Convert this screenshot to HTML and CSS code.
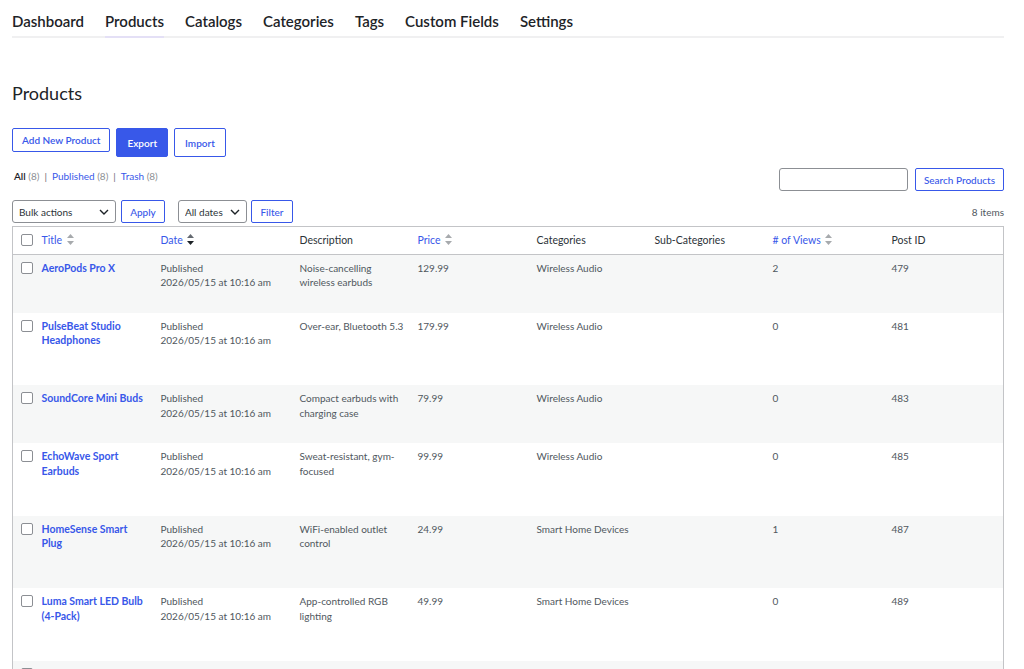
FILE: index.html
```html
<!DOCTYPE html>
<html lang="en">
<head>
  <meta charset="UTF-8">
  <meta name="viewport" content="width=device-width, initial-scale=1.0">
  <title>Products</title>
  <link rel="stylesheet" href="styles.css">
</head>
<body>
  <div class="wrap">
    <nav class="tabs">
      <a href="#">Dashboard</a>
      <a href="#" class="active">Products</a>
      <a href="#">Catalogs</a>
      <a href="#">Categories</a>
      <a href="#">Tags</a>
      <a href="#">Custom Fields</a>
      <a href="#">Settings</a>
    </nav>

    <h1 class="page-title">Products</h1>

    <div class="page-actions">
      <a href="#" class="btn btn-small">Add New Product</a>
      <a href="#" class="btn btn-primary">Export</a>
      <a href="#" class="btn">Import</a>
    </div>

    <div class="status-row">
      <ul class="subsubsub">
        <li><b>All</b> <span class="count">(8)</span></li>
        <li class="sep">|</li>
        <li><a href="#">Published</a> <span class="count">(8)</span></li>
        <li class="sep">|</li>
        <li><a href="#">Trash</a> <span class="count">(8)</span></li>
      </ul>
      <form class="search-box">
        <input type="search">
        <button type="button" class="btn btn-input">Search Products</button>
      </form>
    </div>

    <div class="tablenav">
      <div class="select bulk">
        <select><option>Bulk actions</option></select>
        <svg viewBox="0 0 10 6" width="10" height="6"><path d="M1 1l4 4 4-4" fill="none" stroke="#1d2327" stroke-width="1.4"/></svg>
      </div>
      <button type="button" class="btn btn-input">Apply</button>
      <div class="select dates">
        <select><option>All dates</option></select>
        <svg viewBox="0 0 10 6" width="10" height="6"><path d="M1 1l4 4 4-4" fill="none" stroke="#1d2327" stroke-width="1.4"/></svg>
      </div>
      <button type="button" class="btn btn-input">Filter</button>
      <span class="items">8 items</span>
    </div>

    <table class="list">
      <colgroup>
        <col class="c-check"><col class="c-119"><col class="c-date"><col class="c-118">
        <col class="c-119"><col class="c-118"><col class="c-118"><col class="c-119"><col>
      </colgroup>
      <thead>
        <tr>
          <th class="check"><input type="checkbox"></th>
          <th><a href="#">Title <svg class="sort" viewBox="0 0 7 11" width="7" height="11"><path d="M3.5 0L7 4H0z" fill="#a7aaad"/><path d="M3.5 11L7 7H0z" fill="#a7aaad"/></svg></a></th>
          <th><a href="#">Date <svg class="sort" viewBox="0 0 7 11" width="7" height="11"><path d="M3.5 0L7 4H0z" fill="#646970"/><path d="M3.5 11L7 7H0z" fill="#1d2327"/></svg></a></th>
          <th>Description</th>
          <th><a href="#">Price <svg class="sort" viewBox="0 0 7 11" width="7" height="11"><path d="M3.5 0L7 4H0z" fill="#a7aaad"/><path d="M3.5 11L7 7H0z" fill="#a7aaad"/></svg></a></th>
          <th>Categories</th>
          <th>Sub-Categories</th>
          <th><a href="#"># of Views <svg class="sort" viewBox="0 0 7 11" width="7" height="11"><path d="M3.5 0L7 4H0z" fill="#a7aaad"/><path d="M3.5 11L7 7H0z" fill="#a7aaad"/></svg></a></th>
          <th>Post ID</th>
        </tr>
      </thead>
      <tbody>
        <tr>
          <td class="check"><input type="checkbox"></td>
          <td><a href="#" class="row-title">AeroPods Pro X</a><div class="row-actions">Edit | Quick Edit | Trash | View</div></td>
          <td>Published<br>2026/05/15 at 10:16 am</td>
          <td>Noise-cancelling wireless earbuds</td>
          <td>129.99</td>
          <td>Wireless Audio</td>
          <td></td>
          <td>2</td>
          <td>479</td>
        </tr>
        <tr>
          <td class="check"><input type="checkbox"></td>
          <td><a href="#" class="row-title">PulseBeat Studio Headphones</a><div class="row-actions">Edit | Quick Edit | Trash | View</div></td>
          <td>Published<br>2026/05/15 at 10:16 am</td>
          <td>Over-ear, Bluetooth 5.3</td>
          <td>179.99</td>
          <td>Wireless Audio</td>
          <td></td>
          <td>0</td>
          <td>481</td>
        </tr>
        <tr>
          <td class="check"><input type="checkbox"></td>
          <td><a href="#" class="row-title">SoundCore Mini Buds</a><div class="row-actions">Edit | Quick Edit | Trash | View</div></td>
          <td>Published<br>2026/05/15 at 10:16 am</td>
          <td>Compact earbuds with charging case</td>
          <td>79.99</td>
          <td>Wireless Audio</td>
          <td></td>
          <td>0</td>
          <td>483</td>
        </tr>
        <tr>
          <td class="check"><input type="checkbox"></td>
          <td><a href="#" class="row-title">EchoWave Sport Earbuds</a><div class="row-actions">Edit | Quick Edit | Trash | View</div></td>
          <td>Published<br>2026/05/15 at 10:16 am</td>
          <td>Sweat-resistant, gym-focused</td>
          <td>99.99</td>
          <td>Wireless Audio</td>
          <td></td>
          <td>0</td>
          <td>485</td>
        </tr>
        <tr>
          <td class="check"><input type="checkbox"></td>
          <td><a href="#" class="row-title">HomeSense Smart Plug</a><div class="row-actions">Edit | Quick Edit | Trash | View</div></td>
          <td>Published<br>2026/05/15 at 10:16 am</td>
          <td>WiFi-enabled outlet control</td>
          <td>24.99</td>
          <td>Smart Home Devices</td>
          <td></td>
          <td>1</td>
          <td>487</td>
        </tr>
        <tr>
          <td class="check"><input type="checkbox"></td>
          <td><a href="#" class="row-title">Luma Smart LED Bulb (4-Pack)</a><div class="row-actions">Edit | Quick Edit | Trash | View</div></td>
          <td>Published<br>2026/05/15 at 10:16 am</td>
          <td>App-controlled RGB lighting</td>
          <td>49.99</td>
          <td>Smart Home Devices</td>
          <td></td>
          <td>0</td>
          <td>489</td>
        </tr>
        <tr>
          <td class="check"><input type="checkbox"></td>
          <td><a href="#" class="row-title">NestGuard Doorbell</a><div class="row-actions">Edit | Quick Edit | Trash | View</div></td>
          <td>Published<br>2026/05/15 at 10:16 am</td>
          <td>1080p HD, night vision</td>
          <td>119.99</td>
          <td>Smart Home Devices</td>
          <td></td>
          <td>0</td>
          <td>491</td>
        </tr>
        <tr>
          <td class="check"><input type="checkbox"></td>
          <td><a href="#" class="row-title">ThermoIQ Thermostat</a><div class="row-actions">Edit | Quick Edit | Trash | View</div></td>
          <td>Published<br>2026/05/15 at 10:16 am</td>
          <td>Learns your schedule</td>
          <td>149.99</td>
          <td>Smart Home Devices</td>
          <td></td>
          <td>0</td>
          <td>493</td>
        </tr>
      </tbody>
    </table>
  </div>
</body>
</html>
```

FILE: styles.css
```css
* {
  box-sizing: border-box;
}
body {
  margin: 0;
  background: #fff;
  color: #50575e;
  font-family: Lato, "Noto Sans", sans-serif;
  font-size: 10px;
}
a {
  color: #3858e9;
  text-decoration: none;
}
.wrap {
  padding: 0 20px 0 12px;
}

/* top tabs */
.tabs {
  display: flex;
  gap: 21px;
  padding-top: 11px;
  border-bottom: 2px solid #f0f0f1;
}
.tabs a {
  color: #1d2327;
  font-size: 15px;
  font-weight: 600;
  line-height: 20px;
  padding-bottom: 5px;
  margin-bottom: -2px;
  border-bottom: 2px solid transparent;
}
.tabs a.active {
  border-bottom-color: #e4e0f6;
}

.page-title {
  margin: 41px 0 21px;
  font-size: 18px;
  font-weight: 400;
  line-height: 28px;
  color: #1d2327;
}

/* buttons */
.btn {
  display: inline-flex;
  align-items: center;
  justify-content: center;
  height: 29px;
  padding: 0 10px;
  border: 1px solid #3858e9;
  border-radius: 2px;
  background: #fff;
  color: #3858e9;
  font-family: inherit;
  font-size: 10px;
  font-weight: 600;
  cursor: pointer;
}
.btn-small {
  height: 24px;
  padding: 0 9px;
}
.btn-primary {
  background: #3858e9;
  color: #fff;
}
.btn-input {
  height: 23px;
  padding: 0 9px;
  font-weight: 500;
}
.page-actions {
  display: flex;
  align-items: flex-start;
  gap: 6px;
}

.status-row {
  display: flex;
  justify-content: space-between;
  align-items: flex-start;
  margin-top: 11px;
}
.subsubsub {
  display: flex;
  gap: 5px;
  margin: 0;
  padding: 0 0 0 2px;
  list-style: none;
  line-height: 16px;
  color: #646970;
}
.subsubsub b {
  color: #1d2327;
  font-weight: 600;
}
.count {
  color: #8c8f94;
}
.search-box {
  display: flex;
  gap: 7px;
  margin: 0;
}
.search-box input {
  width: 129px;
  height: 23px;
  border: 1px solid #8c8f94;
  border-radius: 3px;
}
.search-box .btn {
  width: 89px;
  padding: 0;
}

/* filters */
.tablenav {
  display: flex;
  align-items: center;
  margin-top: 9px;
  height: 23px;
}
.select {
  position: relative;
  height: 23px;
}
.select select {
  appearance: none;
  height: 23px;
  padding: 0 20px 0 6px;
  border: 1px solid #8c8f94;
  border-radius: 3px;
  background: #fff;
  color: #2c3338;
  font-family: inherit;
  font-size: 10px;
}
.select svg {
  position: absolute;
  right: 7px;
  top: 9px;
  pointer-events: none;
}
.bulk select {
  width: 104px;
}
.dates select {
  width: 69px;
}
.tablenav .btn {
  margin-left: 5px;
  width: 44px;
  padding: 0;
}
.tablenav .dates {
  margin-left: 13px;
}
.tablenav .dates + .btn {
  margin-left: 4px;
  width: 42px;
}
.items {
  margin-left: auto;
  color: #50575e;
}

/* table */
.list {
  width: 100%;
  margin-top: 3px;
  border: 1px solid #c3c4c7;
  border-collapse: collapse;
  table-layout: fixed;
  line-height: 14.5px;
}
.c-check { width: 21px; }
.c-date { width: 139px; }
.c-118 { width: 118px; }
.c-119 { width: 119px; }
.list th {
  padding: 5.5px 8px 6.5px;
  text-align: left;
  font-size: 10.5px;
  font-weight: 400;
  color: #2c3338;
  border-bottom: 1px solid #c3c4c7;
  white-space: nowrap;
}
.list td {
  padding: 6px 4px 6px 8px;
  vertical-align: top;
}
.list tbody tr:nth-child(odd) {
  background: #f6f7f7;
}
.list th.check,
.list td.check {
  padding: 6px 0 0 8px;
}
.list th.check {
  padding-top: 5.5px;
  padding-bottom: 6.5px;
}
.list input[type="checkbox"] {
  appearance: none;
  display: block;
  width: 12px;
  height: 12px;
  margin: 1px 0 0;
  border: 1px solid #8c8f94;
  border-radius: 2px;
  background: #fff;
}
.sort {
  vertical-align: -1px;
  margin-left: 2px;
}
.row-title {
  font-size: 10.5px;
  font-weight: 700;
}
.row-actions {
  visibility: hidden;
  height: 31.5px;
  padding-top: 2px;
  overflow: hidden;
}
```
